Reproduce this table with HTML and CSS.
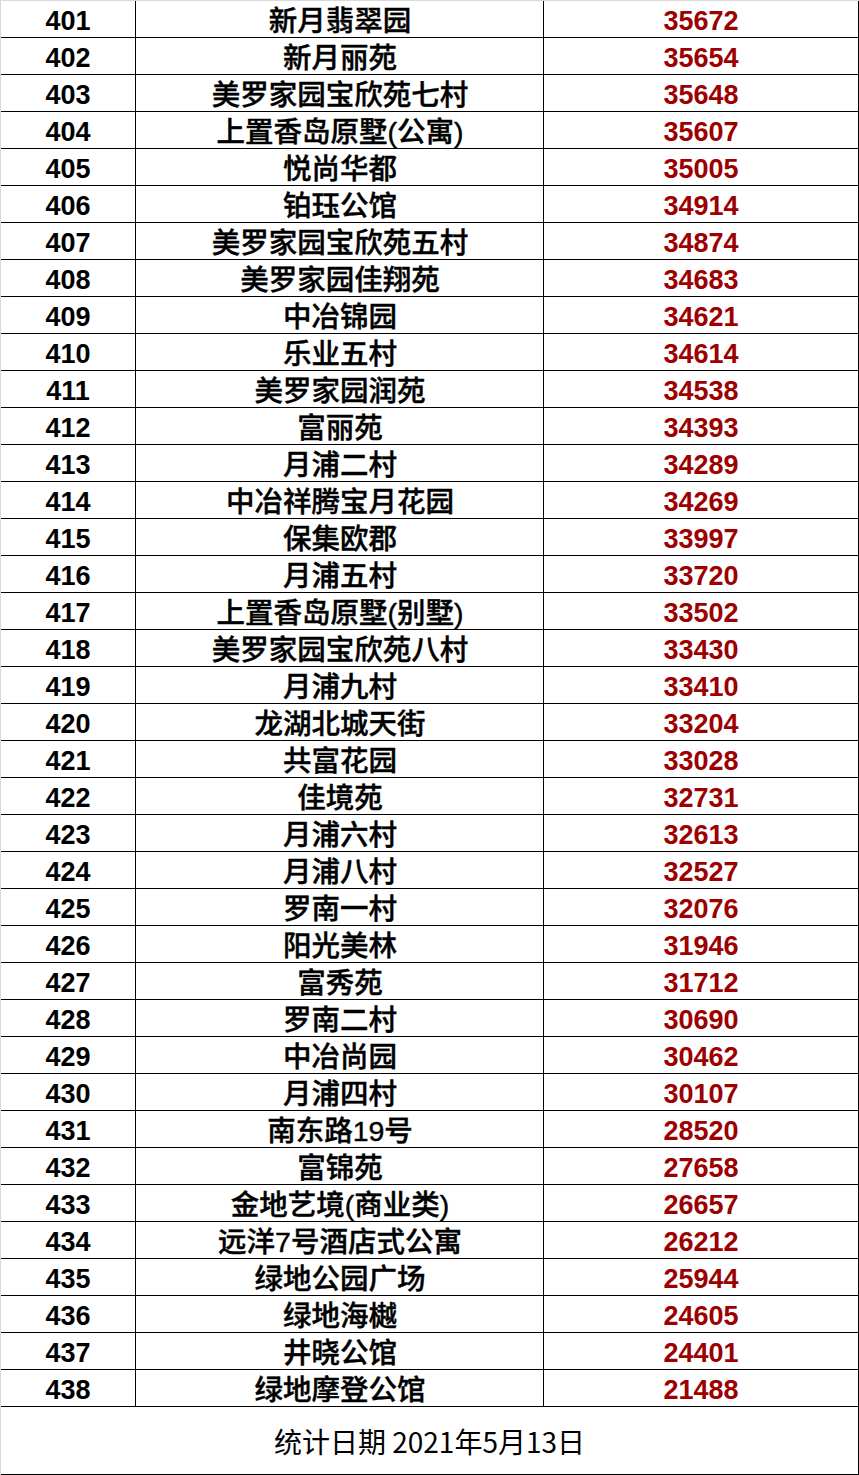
FILE: index.html
```html
<!DOCTYPE html>
<html lang="zh-CN">
<head>
<meta charset="utf-8">
<title>小区排名</title>
<link rel="stylesheet" href="styles.css">
</head>
<body>
<div class="sheet">
  <div class="row"><div class="c num">401</div><div class="c name">新月翡翠园</div><div class="c val">35672</div></div>
  <div class="row"><div class="c num">402</div><div class="c name">新月丽苑</div><div class="c val">35654</div></div>
  <div class="row"><div class="c num">403</div><div class="c name">美罗家园宝欣苑七村</div><div class="c val">35648</div></div>
  <div class="row"><div class="c num">404</div><div class="c name">上置香岛原墅(公寓)</div><div class="c val">35607</div></div>
  <div class="row"><div class="c num">405</div><div class="c name">悦尚华都</div><div class="c val">35005</div></div>
  <div class="row"><div class="c num">406</div><div class="c name">铂珏公馆</div><div class="c val">34914</div></div>
  <div class="row"><div class="c num">407</div><div class="c name">美罗家园宝欣苑五村</div><div class="c val">34874</div></div>
  <div class="row"><div class="c num">408</div><div class="c name">美罗家园佳翔苑</div><div class="c val">34683</div></div>
  <div class="row"><div class="c num">409</div><div class="c name">中冶锦园</div><div class="c val">34621</div></div>
  <div class="row"><div class="c num">410</div><div class="c name">乐业五村</div><div class="c val">34614</div></div>
  <div class="row"><div class="c num">411</div><div class="c name">美罗家园润苑</div><div class="c val">34538</div></div>
  <div class="row"><div class="c num">412</div><div class="c name">富丽苑</div><div class="c val">34393</div></div>
  <div class="row"><div class="c num">413</div><div class="c name">月浦二村</div><div class="c val">34289</div></div>
  <div class="row"><div class="c num">414</div><div class="c name">中冶祥腾宝月花园</div><div class="c val">34269</div></div>
  <div class="row"><div class="c num">415</div><div class="c name">保集欧郡</div><div class="c val">33997</div></div>
  <div class="row"><div class="c num">416</div><div class="c name">月浦五村</div><div class="c val">33720</div></div>
  <div class="row"><div class="c num">417</div><div class="c name">上置香岛原墅(别墅)</div><div class="c val">33502</div></div>
  <div class="row"><div class="c num">418</div><div class="c name">美罗家园宝欣苑八村</div><div class="c val">33430</div></div>
  <div class="row"><div class="c num">419</div><div class="c name">月浦九村</div><div class="c val">33410</div></div>
  <div class="row"><div class="c num">420</div><div class="c name">龙湖北城天街</div><div class="c val">33204</div></div>
  <div class="row"><div class="c num">421</div><div class="c name">共富花园</div><div class="c val">33028</div></div>
  <div class="row"><div class="c num">422</div><div class="c name">佳境苑</div><div class="c val">32731</div></div>
  <div class="row"><div class="c num">423</div><div class="c name">月浦六村</div><div class="c val">32613</div></div>
  <div class="row"><div class="c num">424</div><div class="c name">月浦八村</div><div class="c val">32527</div></div>
  <div class="row"><div class="c num">425</div><div class="c name">罗南一村</div><div class="c val">32076</div></div>
  <div class="row"><div class="c num">426</div><div class="c name">阳光美林</div><div class="c val">31946</div></div>
  <div class="row"><div class="c num">427</div><div class="c name">富秀苑</div><div class="c val">31712</div></div>
  <div class="row"><div class="c num">428</div><div class="c name">罗南二村</div><div class="c val">30690</div></div>
  <div class="row"><div class="c num">429</div><div class="c name">中冶尚园</div><div class="c val">30462</div></div>
  <div class="row"><div class="c num">430</div><div class="c name">月浦四村</div><div class="c val">30107</div></div>
  <div class="row"><div class="c num">431</div><div class="c name">南东路19号</div><div class="c val">28520</div></div>
  <div class="row"><div class="c num">432</div><div class="c name">富锦苑</div><div class="c val">27658</div></div>
  <div class="row"><div class="c num">433</div><div class="c name">金地艺境(商业类)</div><div class="c val">26657</div></div>
  <div class="row"><div class="c num">434</div><div class="c name">远洋7号酒店式公寓</div><div class="c val">26212</div></div>
  <div class="row"><div class="c num">435</div><div class="c name">绿地公园广场</div><div class="c val">25944</div></div>
  <div class="row"><div class="c num">436</div><div class="c name">绿地海樾</div><div class="c val">24605</div></div>
  <div class="row"><div class="c num">437</div><div class="c name">井晓公馆</div><div class="c val">24401</div></div>
  <div class="row"><div class="c num">438</div><div class="c name">绿地摩登公馆</div><div class="c val">21488</div></div>
  <div class="foot">统计日期 2021年5月13日</div>
</div>
</body>
</html>
```
FILE: styles.css
```css
html, body {
  margin: 0;
  padding: 0;
  background: #ffffff;
}
.sheet {
  width: 858px;
  border-top: 1px solid #d9d9d9;
  border-left: 1px solid #d9d9d9;
  font-family: "Liberation Sans", "Noto Sans CJK SC", sans-serif;
  color: #000;
}
.row {
  display: grid;
  grid-template-columns: 136px 407px 315px;
  height: 37px;
  box-sizing: border-box;
  border-bottom: 1px solid #000;
}
.c {
  box-sizing: border-box;
  border-right: 1px solid #000;
  text-align: center;
  font-weight: 700;
  font-size: 27px;
  padding-top: 5px;
  line-height: 31px;
  white-space: nowrap;
  overflow: hidden;
}
.c.num {
  width: 135px;
}
.c.name {
  font-size: 28.5px;
  font-weight: 500;
  -webkit-text-stroke: 0.4px #000;
}
.c.val {
  color: #9c0000;
}
.foot {
  height: 68px;
  box-sizing: border-box;
  border-right: 1px solid #000;
  border-bottom: 1px solid #000;
  text-align: center;
  font-family: "Noto Sans CJK SC", sans-serif;
  font-size: 28px;
  font-weight: 400;
  line-height: 68px;
}
```
